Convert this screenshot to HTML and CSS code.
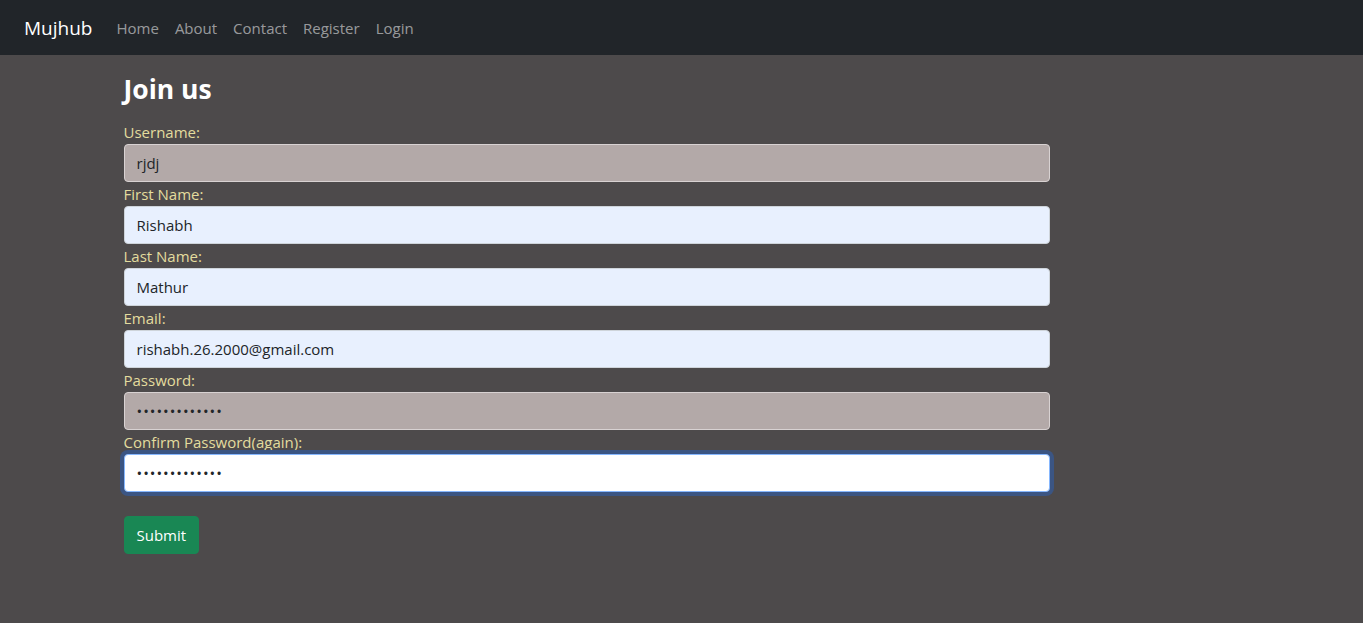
FILE: index.html
```html
<!DOCTYPE html>
<html lang="en">
<head>
<meta charset="utf-8">
<title>Mujhub - Register</title>
<link rel="stylesheet" href="styles.css">
</head>
<body>
<nav class="navbar">
  <a class="brand" href="#">Mujhub</a>
  <ul class="nav">
    <li><a href="#">Home</a></li>
    <li><a href="#">About</a></li>
    <li><a href="#">Contact</a></li>
    <li><a href="#">Register</a></li>
    <li><a href="#">Login</a></li>
  </ul>
</nav>
<main class="container">
  <div class="col">
    <h2 class="title">Join us</h2>
    <form class="form">
      <label class="label">Username:</label>
      <input class="input filled" type="text" value="rjdj">
      <label class="label">First Name:</label>
      <input class="input autofill" type="text" value="Rishabh">
      <label class="label">Last Name:</label>
      <input class="input autofill" type="text" value="Mathur">
      <label class="label">Email:</label>
      <input class="input autofill" type="text" value="rishabh.26.2000@gmail.com">
      <label class="label">Password:</label>
      <input class="input filled pw" type="password" value="rishabhmathur">
      <label class="label">Confirm Password(again):</label>
      <input class="input focused pw" type="password" value="rishabhmathur">
      <div class="actions">
        <button class="btn" type="button">Submit</button>
      </div>
    </form>
  </div>
</main>
</body>
</html>
```
FILE: styles.css
```css
* { box-sizing: border-box; }
html, body { margin: 0; padding: 0; }
body {
  background: #4d4a4b;
  font-family: "Open Sans", "Noto Sans", sans-serif;
  font-size: 15px;
  line-height: 24px;
  color: #212529;
  min-height: 623px;
}
.navbar {
  background: #212529;
  height: 55px;
  display: flex;
  align-items: center;
  padding: 0 24px;
}
.brand {
  color: #fff;
  text-decoration: none;
  font-size: 19px;
  margin-right: 16px;
}
.nav {
  list-style: none;
  margin: 0;
  padding: 0;
  display: flex;
}
.nav a {
  display: block;
  padding: 8px;
  color: rgba(255,255,255,0.55);
  text-decoration: none;
  font-size: 15px;
}
.container {
  width: 1140px;
  margin: 0 auto;
  padding: 0 12px;
}
.col {
  width: 926px;
}
.title {
  color: #fff;
  font-size: 26.5px;
  font-weight: 700;
  line-height: 38px;
  margin: 15px 0 12px;
}
.form { display: flex; flex-direction: column; }
.label {
  color: #e3dc9e;
  font-size: 15px;
  line-height: 24px;
}
.input {
  height: 38px;
  padding: 6px 12px;
  border: 1px solid #ced4da;
  border-radius: 4px;
  font: inherit;
  font-size: 15px;
  color: #212529;
  outline: none;
}
.pw { letter-spacing: 1px; }
.filled { background: #b3a9a8; border-color: #d8d2d2; }
.autofill { background: #e8f0fe; }
.focused {
  background: #fff;
  border-color: #86b7fe;
  box-shadow: 0 0 0 4px #3b5583;
}
.actions { margin-top: 24px; }
.btn {
  background: #198754;
  color: #fff;
  border: 1px solid #198754;
  border-radius: 4px;
  height: 38px;
  padding: 0 12px;
  font: inherit;
  font-size: 15px;
}
```
